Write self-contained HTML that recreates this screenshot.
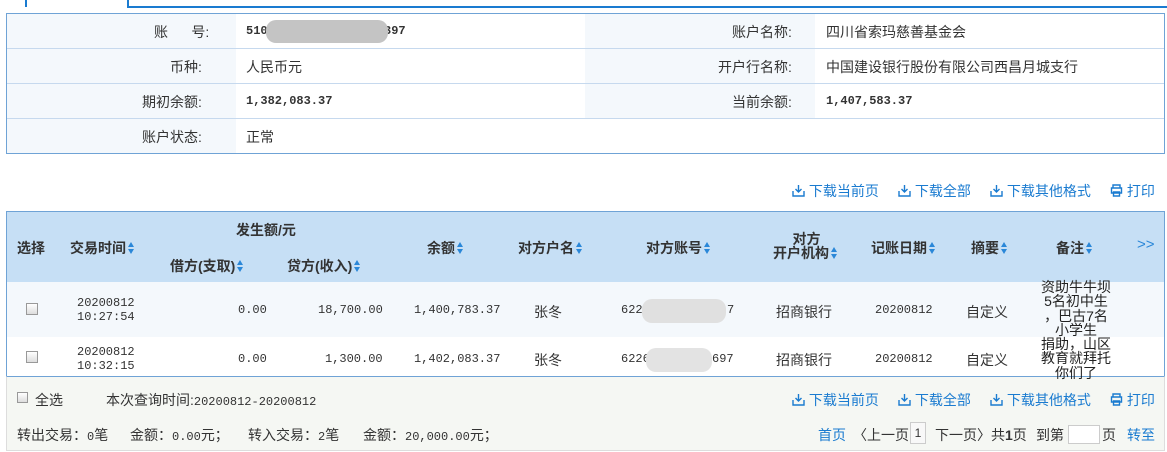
<!DOCTYPE html>
<html><head><meta charset="utf-8">
<style>
*{margin:0;padding:0;box-sizing:border-box}
body{width:1167px;height:452px;background:#fff;position:relative;overflow:hidden;font-family:"Liberation Sans","Noto Sans CJK SC",sans-serif;font-size:14px;color:#333}
.a{position:absolute;white-space:nowrap}
.m{font-family:"Liberation Mono","Noto Sans CJK SC",monospace;font-size:12px}
.b{font-weight:bold}
.lk{color:#1a7bd0;font-size:14px}
.hd{font-weight:bold;color:#333;font-size:14px}
.blur{position:absolute;background:#d9d9d9;border-radius:10px}
svg.ar{width:8px;height:14px;vertical-align:-2px;margin-left:1px}
.cb{position:absolute;width:12px;height:12px;border:1px solid #999;background:linear-gradient(#fff,#ddd)}
</style></head><body>
<div class="a" style="left:25px;top:0;width:2px;height:7px;background:#1a7bd0"></div>
<div class="a" style="left:127px;top:0;width:2px;height:8px;background:#1a7bd0"></div>
<div class="a" style="left:127px;top:6px;width:1040px;height:2px;background:#1a7bd0"></div>

<div class="a" style="left:6px;top:13px;width:1159px;height:141px;border:1px solid #6fa3d6"></div>
<div class="a" style="left:7px;top:14px;width:229px;height:139px;background:#f4f8fc"></div>
<div class="a" style="left:585px;top:14px;width:230px;height:104px;background:#f4f8fc"></div>
<div class="a" style="left:7px;top:48px;width:1157px;height:1px;background:#c6d9ee"></div>
<div class="a" style="left:7px;top:83px;width:1157px;height:1px;background:#c6d9ee"></div>
<div class="a" style="left:7px;top:118px;width:1157px;height:1px;background:#c6d9ee"></div>
<div class="a" style="left:154px;top:22px">账&nbsp;&nbsp;&nbsp;&nbsp;&nbsp;&nbsp;号:</div>
<div class="a m b" style="left:246px;top:24px">510</div>
<div class="a m b" style="left:384px;top:24px">397</div>
<div class="blur" style="left:266px;top:20px;width:122px;height:23px;background:#c4c4c4"></div>
<div class="a" style="left:170px;top:57px">币种:</div>
<div class="a" style="left:246px;top:57px">人民币元</div>
<div class="a" style="left:142px;top:92px">期初余额:</div>
<div class="a m b" style="left:246px;top:94px">1,382,083.37</div>
<div class="a" style="left:142px;top:127px">账户状态:</div>
<div class="a" style="left:246px;top:127px">正常</div>
<div class="a" style="left:732px;top:22px">账户名称:</div>
<div class="a" style="left:826px;top:22px">四川省索玛慈善基金会</div>
<div class="a" style="left:718px;top:57px">开户行名称:</div>
<div class="a" style="left:826px;top:57px">中国建设银行股份有限公司西昌月城支行</div>
<div class="a" style="left:732px;top:92px">当前余额:</div>
<div class="a m b" style="left:826px;top:94px">1,407,583.37</div>

<div class="a lk" style="left:792px;top:181px"><svg width="13" height="13" viewBox="0 0 13 13" style="vertical-align:-1px"><path d="M6.5 1v7M3.5 5l3 3 3-3M1 7v5h11V7" fill="none" stroke="#1a7bd0" stroke-width="1.4"/></svg> 下载当前页</div>
<div class="a lk" style="left:898px;top:181px"><svg width="13" height="13" viewBox="0 0 13 13" style="vertical-align:-1px"><path d="M6.5 1v7M3.5 5l3 3 3-3M1 7v5h11V7" fill="none" stroke="#1a7bd0" stroke-width="1.4"/></svg> 下载全部</div>
<div class="a lk" style="left:990px;top:181px"><svg width="13" height="13" viewBox="0 0 13 13" style="vertical-align:-1px"><path d="M6.5 1v7M3.5 5l3 3 3-3M1 7v5h11V7" fill="none" stroke="#1a7bd0" stroke-width="1.4"/></svg> 下载其他格式</div>
<div class="a lk" style="left:1110px;top:181px"><svg width="13" height="13" viewBox="0 0 13 13" style="vertical-align:-1px"><path d="M3 4V1h7v3M1.5 4h10v5h-10zM3.5 8h6v4h-6z" fill="none" stroke="#1a7bd0" stroke-width="1.4"/></svg> 打印</div>

<div class="a" style="left:6px;top:211px;width:1159px;height:166px;border:1px solid #6fa3d6;border-bottom:none"></div>
<div class="a" style="left:7px;top:212px;width:1157px;height:70px;background:#c6dff5"></div>
<div class="a" style="left:7px;top:282px;width:1157px;height:55px;background:#f4f8fc"></div>
<div class="a" style="left:6px;top:376px;width:1159px;height:75px;background:#f5f7f3;border:1px solid #ddd;border-top:1px solid #6fa3d6"></div>

<div class="a hd" style="left:17px;top:238px">选择</div>
<div class="a hd" style="left:70px;top:238px">交易时间<svg class="ar" viewBox="0 0 8 14"><path d="M4 1L7 6H1zM4 13L1 8h6z" fill="#2a87d8"/></svg></div>
<div class="a hd" style="left:236px;top:220px">发生额/元</div>
<div class="a hd" style="left:170px;top:256px">借方(支取)<svg class="ar" viewBox="0 0 8 14"><path d="M4 1L7 6H1zM4 13L1 8h6z" fill="#2a87d8"/></svg></div>
<div class="a hd" style="left:287px;top:256px">贷方(收入)<svg class="ar" viewBox="0 0 8 14"><path d="M4 1L7 6H1zM4 13L1 8h6z" fill="#2a87d8"/></svg></div>
<div class="a hd" style="left:427px;top:238px">余额<svg class="ar" viewBox="0 0 8 14"><path d="M4 1L7 6H1zM4 13L1 8h6z" fill="#2a87d8"/></svg></div>
<div class="a hd" style="left:518px;top:238px">对方户名<svg class="ar" viewBox="0 0 8 14"><path d="M4 1L7 6H1zM4 13L1 8h6z" fill="#2a87d8"/></svg></div>
<div class="a hd" style="left:646px;top:238px">对方账号<svg class="ar" viewBox="0 0 8 14"><path d="M4 1L7 6H1zM4 13L1 8h6z" fill="#2a87d8"/></svg></div>
<div class="a hd" style="left:773px;top:232px;line-height:14px">&nbsp;&nbsp;&nbsp;&nbsp;&nbsp;对方<br>开户机构<svg class="ar" viewBox="0 0 8 14"><path d="M4 1L7 6H1zM4 13L1 8h6z" fill="#2a87d8"/></svg></div>
<div class="a hd" style="left:871px;top:238px">记账日期<svg class="ar" viewBox="0 0 8 14"><path d="M4 1L7 6H1zM4 13L1 8h6z" fill="#2a87d8"/></svg></div>
<div class="a hd" style="left:971px;top:238px">摘要<svg class="ar" viewBox="0 0 8 14"><path d="M4 1L7 6H1zM4 13L1 8h6z" fill="#2a87d8"/></svg></div>
<div class="a hd" style="left:1056px;top:238px">备注<svg class="ar" viewBox="0 0 8 14"><path d="M4 1L7 6H1zM4 13L1 8h6z" fill="#2a87d8"/></svg></div>
<div class="a" style="left:1137px;top:236px;color:#2a87d8;font-size:15px">&gt;&gt;</div>

<div class="cb" style="left:26px;top:303px"></div>
<div class="a m" style="left:77px;top:296px;line-height:14px">20200812<br>10:27:54</div>
<div class="a m" style="left:238px;top:303px">0.00</div>
<div class="a m" style="left:318px;top:303px">18,700.00</div>
<div class="a m" style="left:414px;top:303px">1,400,783.37</div>
<div class="a" style="left:534px;top:302px">张冬</div>
<div class="a m" style="left:621px;top:303px">622</div>
<div class="a m" style="left:727px;top:303px">7</div>
<div class="blur" style="left:642px;top:299px;width:84px;height:24px;background:#e0e0e0"></div>
<div class="a" style="left:776px;top:302px">招商银行</div>
<div class="a m" style="left:875px;top:303px">20200812</div>
<div class="a" style="left:966px;top:302px">自定义</div>

<div class="cb" style="left:26px;top:351px"></div>
<div class="a m" style="left:77px;top:345px;line-height:14px">20200812<br>10:32:15</div>
<div class="a m" style="left:238px;top:352px">0.00</div>
<div class="a m" style="left:325px;top:352px">1,300.00</div>
<div class="a m" style="left:414px;top:352px">1,402,083.37</div>
<div class="a" style="left:534px;top:350px">张冬</div>
<div class="a m" style="left:621px;top:352px">6226</div>
<div class="a m" style="left:712px;top:352px">697</div>
<div class="blur" style="left:646px;top:348px;width:66px;height:24px;background:#e3e3e3"></div>
<div class="a" style="left:776px;top:350px">招商银行</div>
<div class="a m" style="left:875px;top:352px">20200812</div>
<div class="a" style="left:966px;top:350px">自定义</div>

<div class="a" style="left:1036px;top:280px;width:80px;line-height:14.3px;text-align:center;color:#222;z-index:2">资助牛牛坝<br>5名初中生<br>，巴古7名<br>小学生<br>捐助，山区<br>教育就拜托<br>你们了</div>

<div class="cb" style="left:17px;top:392px;width:11px;height:11px"></div>
<div class="a" style="left:35px;top:390px">全选</div>
<div class="a" style="left:106px;top:390px">本次查询时间:<span class="m">20200812-20200812</span></div>
<div class="a lk" style="left:792px;top:390px"><svg width="13" height="13" viewBox="0 0 13 13" style="vertical-align:-1px"><path d="M6.5 1v7M3.5 5l3 3 3-3M1 7v5h11V7" fill="none" stroke="#1a7bd0" stroke-width="1.4"/></svg> 下载当前页</div>
<div class="a lk" style="left:898px;top:390px"><svg width="13" height="13" viewBox="0 0 13 13" style="vertical-align:-1px"><path d="M6.5 1v7M3.5 5l3 3 3-3M1 7v5h11V7" fill="none" stroke="#1a7bd0" stroke-width="1.4"/></svg> 下载全部</div>
<div class="a lk" style="left:990px;top:390px"><svg width="13" height="13" viewBox="0 0 13 13" style="vertical-align:-1px"><path d="M6.5 1v7M3.5 5l3 3 3-3M1 7v5h11V7" fill="none" stroke="#1a7bd0" stroke-width="1.4"/></svg> 下载其他格式</div>
<div class="a lk" style="left:1110px;top:390px"><svg width="13" height="13" viewBox="0 0 13 13" style="vertical-align:-1px"><path d="M3 4V1h7v3M1.5 4h10v5h-10zM3.5 8h6v4h-6z" fill="none" stroke="#1a7bd0" stroke-width="1.4"/></svg> 打印</div>

<div class="a" style="left:17px;top:425px">转出交易：<span class="m">0</span>笔</div>
<div class="a" style="left:130px;top:425px">金额：<span class="m">0.00</span>元；</div>
<div class="a" style="left:248px;top:425px">转入交易：<span class="m">2</span>笔</div>
<div class="a" style="left:363px;top:425px">金额：<span class="m">20,000.00</span>元；</div>

<div class="a lk" style="left:818px;top:425px">首页</div>
<div class="a" style="left:853px;top:425px">〈上一页</div>
<div class="a" style="left:910px;top:422px;width:16px;height:22px;border:1px solid #ccc;background:#f8f8f8;text-align:center;line-height:20px;font-size:12px">1</div>
<div class="a" style="left:935px;top:425px">下一页〉共<b>1</b>页</div>
<div class="a" style="left:1036px;top:425px">到第</div>
<div class="a" style="left:1068px;top:425px;width:32px;height:19px;border:1px solid #ccc;background:#fff"></div>
<div class="a" style="left:1102px;top:425px">页</div>
<div class="a lk" style="left:1127px;top:425px">转至</div>
</body></html>
